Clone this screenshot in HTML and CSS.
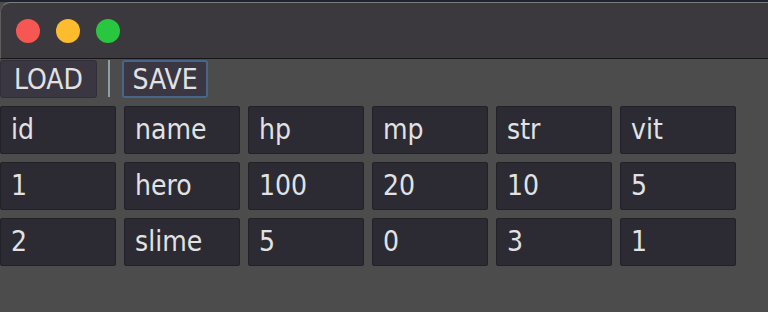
FILE: index.html
```html
<!DOCTYPE html>
<html>
<head>
<meta charset="utf-8">
<link rel="stylesheet" href="styles.css">
</head>
<body>
<div class="window">
  <div class="titlebar">
    <span class="light red"></span>
    <span class="light yellow"></span>
    <span class="light green"></span>
  </div>
  <div class="content">
    <div class="toolbar">
      <div class="btn btn-load">LOAD</div>
      <div class="sep"></div>
      <div class="btn btn-save">SAVE</div>
    </div>
    <div class="grid">
      <div class="cell">id</div><div class="cell">name</div><div class="cell">hp</div><div class="cell">mp</div><div class="cell">str</div><div class="cell">vit</div>
      <div class="cell">1</div><div class="cell">hero</div><div class="cell">100</div><div class="cell">20</div><div class="cell">10</div><div class="cell">5</div>
      <div class="cell">2</div><div class="cell">slime</div><div class="cell">5</div><div class="cell">0</div><div class="cell">3</div><div class="cell">1</div>
    </div>
  </div>
</div>
</body>
</html>
```
FILE: styles.css
```css
html, body {
  margin: 0;
  padding: 0;
  background: #1e2532;
  overflow: hidden;
  width: 768px;
  height: 312px;
}
.window {
  margin-top: 2px;
  height: 310px;
  background: #4c4c4c;
  font-family: "DejaVu Sans Condensed", "DejaVu Sans", sans-serif;
  font-stretch: semi-condensed;
  font-size: 28px;
  color: #e2e2e2;
}
.titlebar {
  box-sizing: border-box;
  background: #3b393d;
  border-top: 1px solid #7c7c7c;
  border-left: 1px solid #5e5e5e;
  border-bottom: 1px solid #151515;
  border-top-left-radius: 10px;
  height: 57px;
  display: flex;
  align-items: center;
  gap: 16px;
  padding-left: 15px;
}
.light {
  width: 24px;
  height: 24px;
  border-radius: 50%;
  display: block;
}
.red { background: #f75752; }
.yellow { background: #fdbb2e; }
.green { background: #29c640; }
.content {
  padding-top: 1px;
}
.toolbar {
  display: flex;
  align-items: stretch;
  height: 38px;
}
.btn {
  box-sizing: border-box;
  height: 38px;
  background: #3a3743;
  border: 1px solid #302e37;
  border-radius: 3px;
  display: flex;
  align-items: center;
  justify-content: center;
}
.btn-load { width: 97px; }
.sep {
  width: 2px;
  background: #8ba1aa;
  margin: 0 12px 1px 11px;
}
.btn-save {
  width: 86px;
  border: 2px solid #47668a;
}
.grid {
  margin-top: 8px;
  display: grid;
  grid-template-columns: repeat(6, 116px);
  grid-auto-rows: 48px;
  column-gap: 8px;
  row-gap: 8px;
}
.cell {
  box-sizing: border-box;
  background: #2c2a33;
  border: 1px solid #222127;
  border-radius: 2px;
  display: flex;
  align-items: center;
  padding-left: 10px;
  padding-bottom: 1px;
}
```
